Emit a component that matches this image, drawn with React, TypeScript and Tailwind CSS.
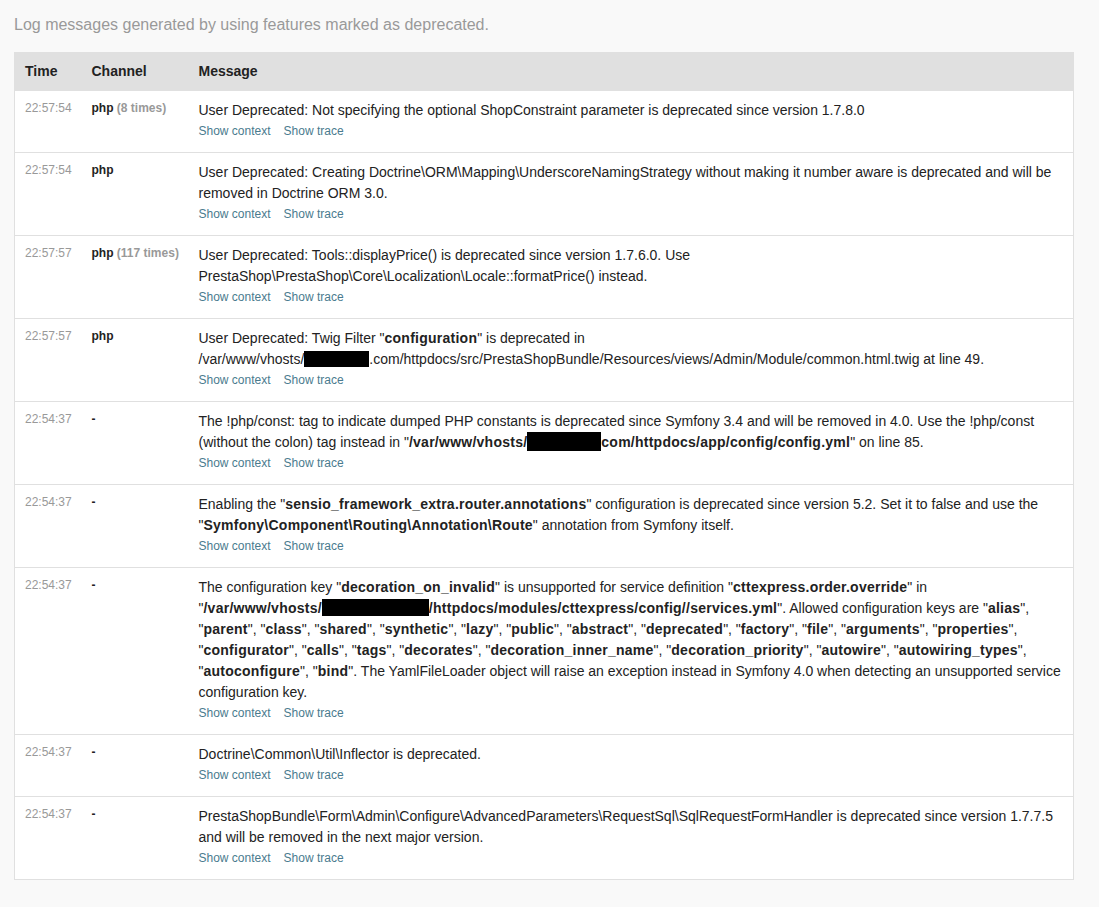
import React from "react";

const B = ({ children }: { children: React.ReactNode }) => (
  <b className="font-bold text-[#222] tracking-[0.25px]">{children}</b>
);

type Row = {
  time: string;
  channel: string;
  count?: string;
  msg: React.ReactNode;
};

const rows: Row[] = [
  {
    time: "22:57:54",
    channel: "php",
    count: "(8 times)",
    msg: <>User Deprecated: Not specifying the optional ShopConstraint parameter is deprecated since version 1.7.8.0</>,
  },
  {
    time: "22:57:54",
    channel: "php",
    msg: (
      <>
        User Deprecated: Creating Doctrine\ORM\Mapping\UnderscoreNamingStrategy without making it number aware is deprecated and will be
        <br />
        removed in Doctrine ORM 3.0.
      </>
    ),
  },
  {
    time: "22:57:57",
    channel: "php",
    count: "(117 times)",
    msg: (
      <>
        User Deprecated: Tools::displayPrice() is deprecated since version 1.7.6.0. Use
        <br />
        PrestaShop\PrestaShop\Core\Localization\Locale::formatPrice() instead.
      </>
    ),
  },
  {
    time: "22:57:57",
    channel: "php",
    msg: (
      <>
        User Deprecated: Twig Filter "<B>configuration</B>" is deprecated in
        <br />
        /var/www/vhosts/<span className="inline-block bg-black w-[65px] h-[16px] align-[-3px]" />.com/httpdocs/src/PrestaShopBundle/Resources/views/Admin/Module/common.html.twig at line 49.
      </>
    ),
  },
  {
    time: "22:54:37",
    channel: "-",
    msg: (
      <>
        The !php/const: tag to indicate dumped PHP constants is deprecated since Symfony 3.4 and will be removed in 4.0. Use the !php/const
        <br />
        (without the colon) tag instead in "
        <B>
          /var/www/vhosts/<span className="inline-block bg-black w-[74px] h-[19px] align-[-4px]" />com/httpdocs/app/config/config.yml
        </B>
        " on line 85.
      </>
    ),
  },
  {
    time: "22:54:37",
    channel: "-",
    msg: (
      <>
        Enabling the "<B>sensio_framework_extra.router.annotations</B>" configuration is deprecated since version 5.2. Set it to false and use the
        <br />
        "<B>Symfony\Component\Routing\Annotation\Route</B>" annotation from Symfony itself.
      </>
    ),
  },
  {
    time: "22:54:37",
    channel: "-",
    msg: (
      <>
        The configuration key "<B>decoration_on_invalid</B>" is unsupported for service definition "<B>cttexpress.order.override</B>" in
        <br />
        "
        <B>
          /var/www/vhosts/<span className="inline-block bg-black w-[107px] h-[17px] align-[-3px]" />/httpdocs/modules/cttexpress/config//services.yml
        </B>
        ". Allowed configuration keys are "<B>alias</B>",
        <br />
        "<B>parent</B>", "<B>class</B>", "<B>shared</B>", "<B>synthetic</B>", "<B>lazy</B>", "<B>public</B>", "<B>abstract</B>", "<B>deprecated</B>", "<B>factory</B>", "<B>file</B>", "<B>arguments</B>", "<B>properties</B>",
        <br />
        "<B>configurator</B>", "<B>calls</B>", "<B>tags</B>", "<B>decorates</B>", "<B>decoration_inner_name</B>", "<B>decoration_priority</B>", "<B>autowire</B>", "<B>autowiring_types</B>",
        <br />
        "<B>autoconfigure</B>", "<B>bind</B>". The YamlFileLoader object will raise an exception instead in Symfony 4.0 when detecting an unsupported service
        <br />
        configuration key.
      </>
    ),
  },
  {
    time: "22:54:37",
    channel: "-",
    msg: <>Doctrine\Common\Util\Inflector is deprecated.</>,
  },
  {
    time: "22:54:37",
    channel: "-",
    msg: (
      <>
        PrestaShopBundle\Form\Admin\Configure\AdvancedParameters\RequestSql\SqlRequestFormHandler is deprecated since version 1.7.7.5
        <br />
        and will be removed in the next major version.
      </>
    ),
  },
];

export default function App() {
  return (
    <div
      className="min-h-[907px] w-[1099px] bg-[#f9f9f9] text-[#222] px-[14px] pt-[14px]"
      style={{ fontFamily: '"Liberation Sans", Arial, sans-serif' }}
    >
      <p className="text-[16px] leading-[22px] text-[#999] mb-[16px]">
        Log messages generated by using features marked as deprecated.
      </p>
      <table className="w-[1060px] border-collapse bg-white border border-[#e0e0e0] table-fixed">
        <colgroup>
          <col className="w-[67px]" />
          <col className="w-[107px]" />
          <col />
        </colgroup>
        <thead>
          <tr className="bg-[#e0e0e0]">
            <th className="text-left font-bold text-[14px] leading-[21px] px-[10px] py-[8px] text-[#222]">Time</th>
            <th className="text-left font-bold text-[14px] leading-[21px] px-[10px] py-[8px] text-[#222]">Channel</th>
            <th className="text-left font-bold text-[14px] leading-[21px] px-[10px] py-[8px] text-[#222]">Message</th>
          </tr>
        </thead>
        <tbody>
          {rows.map((r, i) => (
            <tr key={i} className="border-t border-[#e0e0e0] align-top">
              <td className="pl-[10px] pt-[7px] text-[12px] leading-[21px] text-[#999] whitespace-nowrap">
                {r.time}
              </td>
              <td className="pl-[10px] pt-[7px] text-[12px] leading-[21px] whitespace-nowrap">
                <b className="font-bold text-[#222]">{r.channel}</b>
                {r.count && <b className="font-bold text-[#999]"> {r.count}</b>}
              </td>
              <td className="pl-[10px] pr-[10px] pt-[9px] pb-[10px] text-[14px] leading-[21px] text-[#222]">
                <div className="whitespace-nowrap">{r.msg}</div>
                <div className="text-[12px] leading-[21px] text-[#4a7b8e] flex gap-[13px]">
                  <span>Show context</span>
                  <span>Show trace</span>
                </div>
              </td>
            </tr>
          ))}
        </tbody>
      </table>
    </div>
  );
}
